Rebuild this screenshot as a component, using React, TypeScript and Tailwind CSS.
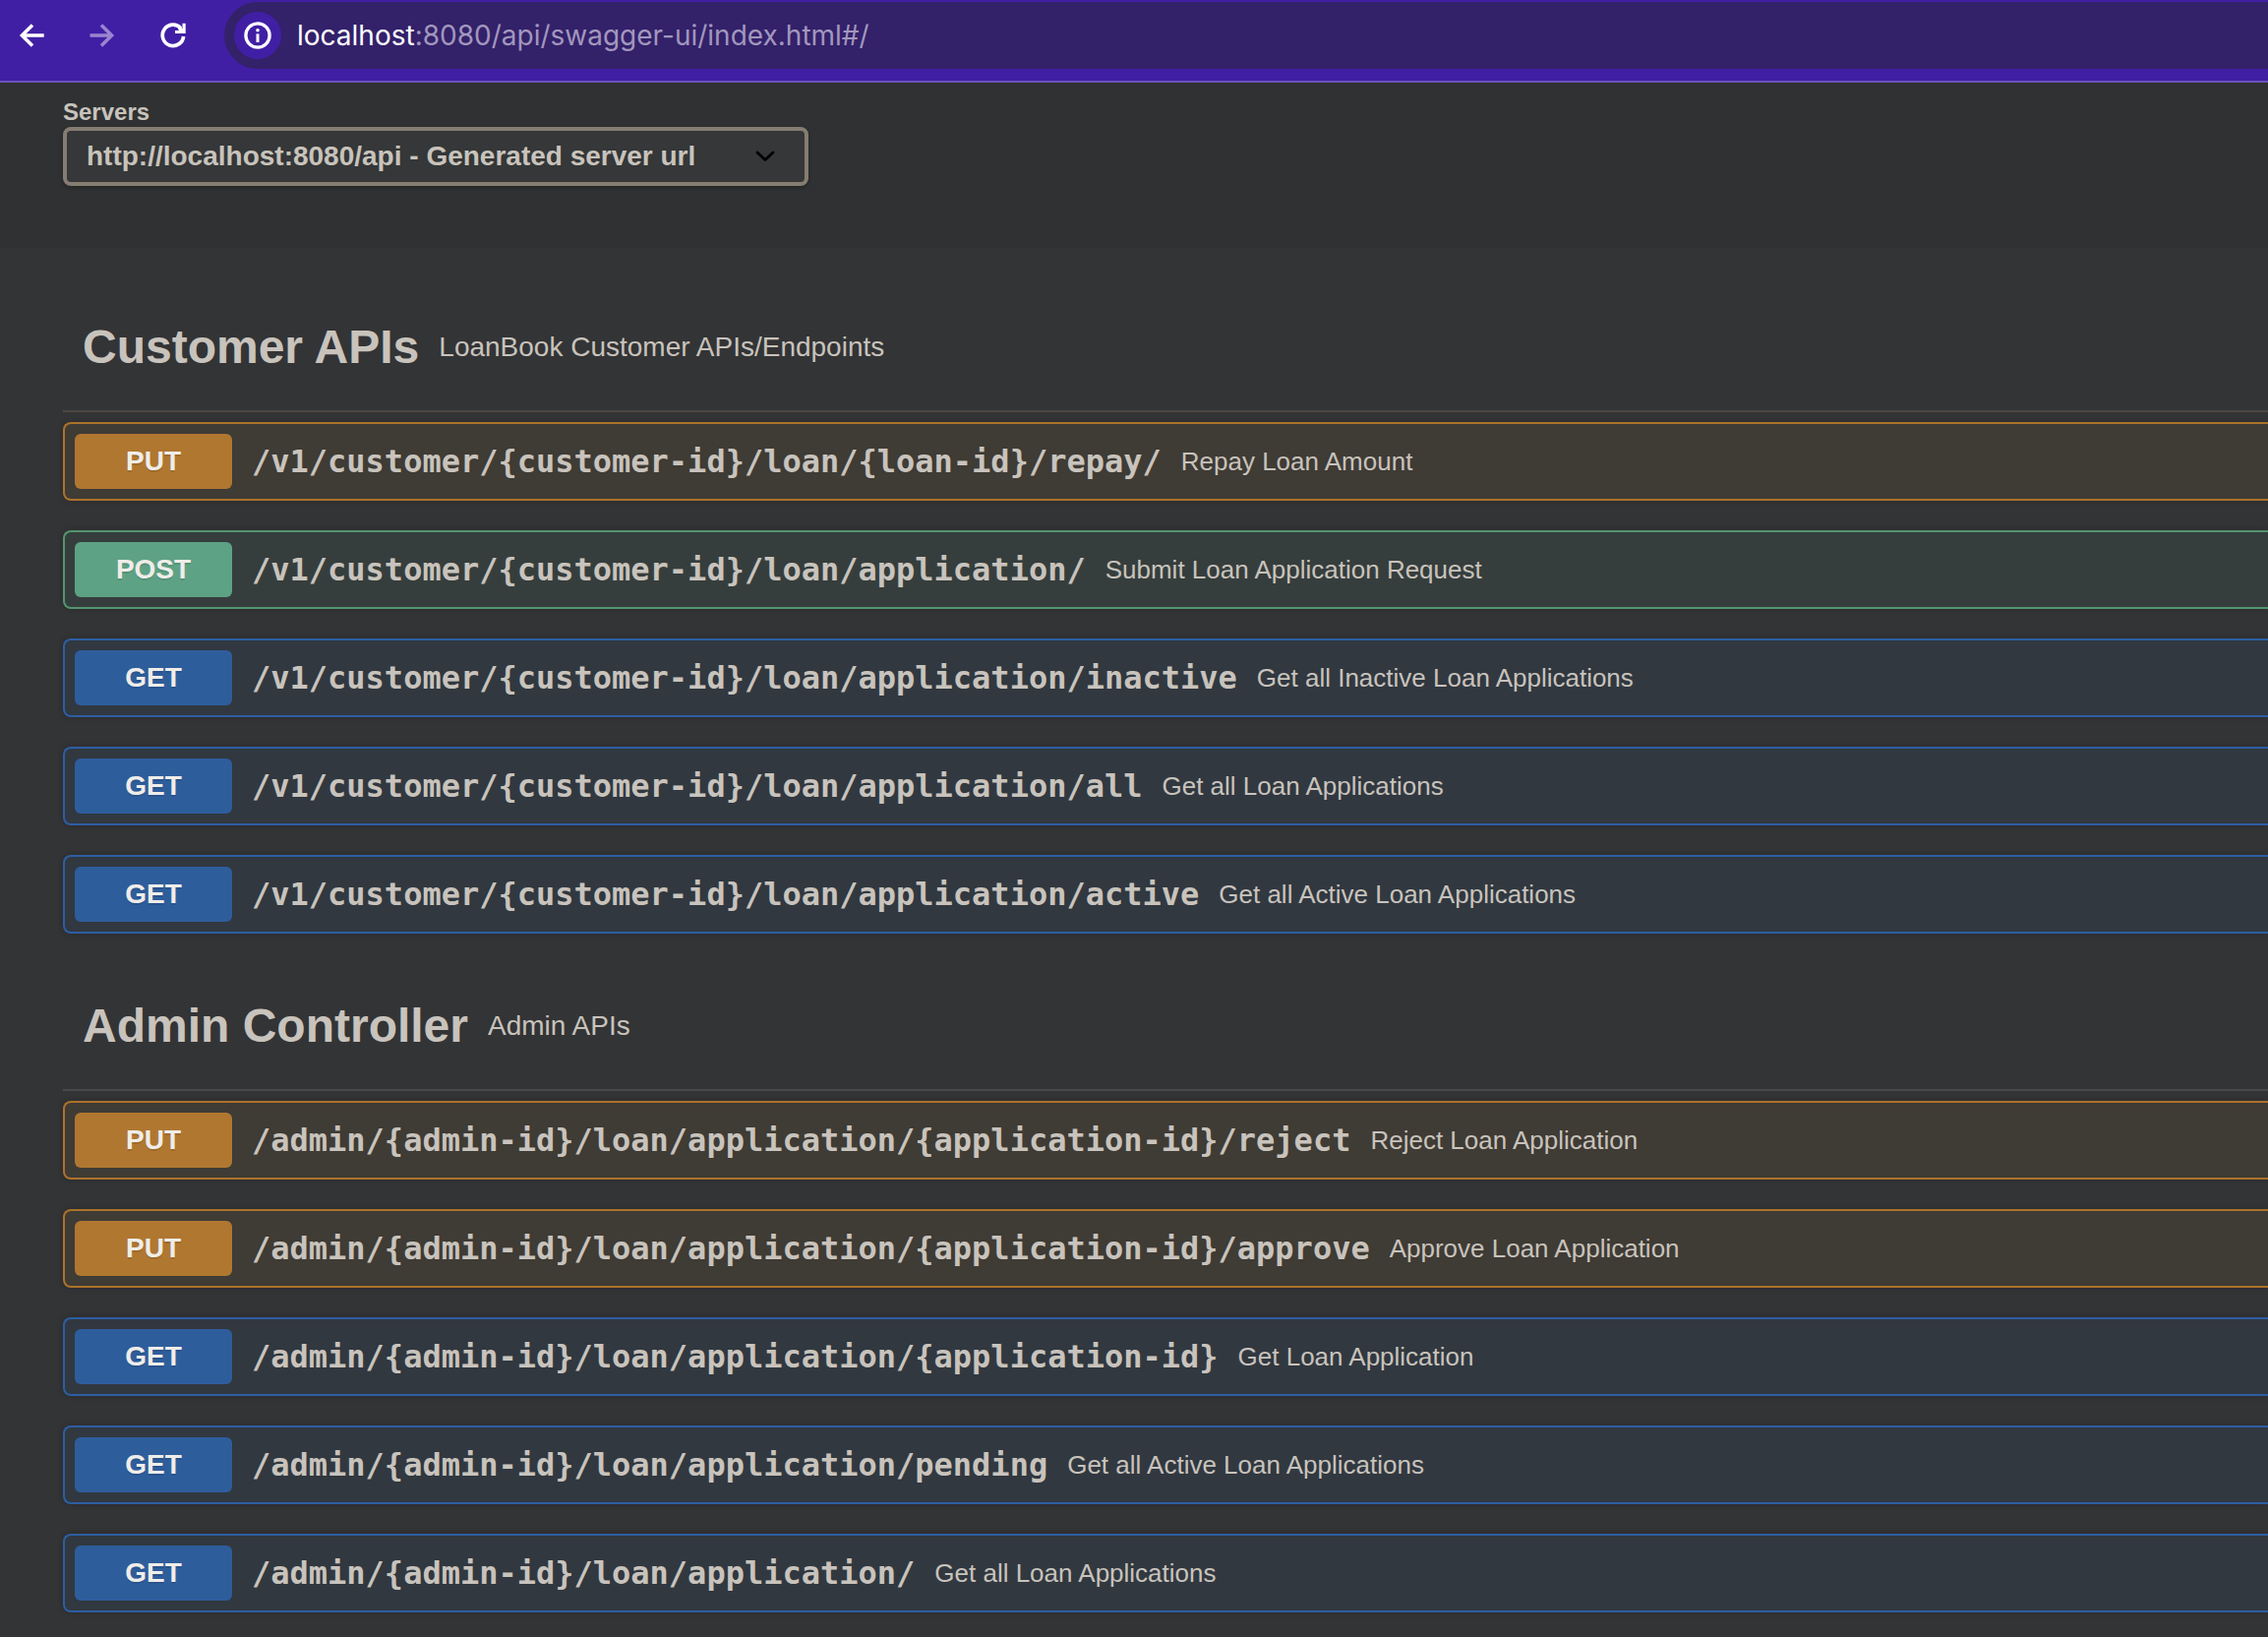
import React from "react";

type Method = "PUT" | "POST" | "GET";

interface Operation {
  method: Method;
  path: string;
  summary: string;
}

interface Tag {
  name: string;
  description: string;
  operations: Operation[];
}

const tags: Tag[] = [
  {
    name: "Customer APIs",
    description: "LoanBook Customer APIs/Endpoints",
    operations: [
      { method: "PUT", path: "/v1/customer/{customer-id}/loan/{loan-id}/repay/", summary: "Repay Loan Amount" },
      { method: "POST", path: "/v1/customer/{customer-id}/loan/application/", summary: "Submit Loan Application Request" },
      { method: "GET", path: "/v1/customer/{customer-id}/loan/application/inactive", summary: "Get all Inactive Loan Applications" },
      { method: "GET", path: "/v1/customer/{customer-id}/loan/application/all", summary: "Get all Loan Applications" },
      { method: "GET", path: "/v1/customer/{customer-id}/loan/application/active", summary: "Get all Active Loan Applications" },
    ],
  },
  {
    name: "Admin Controller",
    description: "Admin APIs",
    operations: [
      { method: "PUT", path: "/admin/{admin-id}/loan/application/{application-id}/reject", summary: "Reject Loan Application" },
      { method: "PUT", path: "/admin/{admin-id}/loan/application/{application-id}/approve", summary: "Approve Loan Application" },
      { method: "GET", path: "/admin/{admin-id}/loan/application/{application-id}", summary: "Get Loan Application" },
      { method: "GET", path: "/admin/{admin-id}/loan/application/pending", summary: "Get all Active Loan Applications" },
      { method: "GET", path: "/admin/{admin-id}/loan/application/", summary: "Get all Loan Applications" },
    ],
  },
];

const rowStyles: Record<Method, string> = {
  PUT: "border-[#ac722b] bg-[#3f3b35]",
  POST: "border-[#53946f] bg-[#363e3d]",
  GET: "border-[#2d5ea3] bg-[#313840]",
};

const badgeStyles: Record<Method, string> = {
  PUT: "bg-[#b07731]",
  POST: "bg-[#5ea285]",
  GET: "bg-[#2e5d9c]",
};

function ArrowIcon({ forward = false }: { forward?: boolean }) {
  return (
    <svg viewBox="0 0 28 28" className="size-7" fill="none" stroke="currentColor" strokeWidth="3.5" aria-hidden="true">
      {forward ? (
        <path d="M1.5 14H24M13 3.4L23.6 14L13 24.6" />
      ) : (
        <path d="M26.7 14H4.2M15 3.4L4.4 14L15 24.6" />
      )}
    </svg>
  );
}

function ReloadIcon() {
  return (
    <svg viewBox="0 0 28 28" className="size-7" fill="none" stroke="currentColor" aria-hidden="true">
      <path d="M24.6 15A10.7 10.7 0 1 1 21.8 6.6" strokeWidth="3.7" />
      <path d="M26.7 1.8V12H16V9H20.2L18.8 7.6L21.4 5L23.5 7V1.8Z" fill="currentColor" stroke="none" />
    </svg>
  );
}

function InfoIcon() {
  return (
    <svg viewBox="0 0 28 28" className="size-7" fill="none" stroke="currentColor" aria-hidden="true">
      <circle cx="14" cy="14" r="12.1" strokeWidth="3.3" />
      <path d="M14 12.4V21" strokeWidth="3" />
      <circle cx="14" cy="8.7" r="1.8" fill="currentColor" stroke="none" />
    </svg>
  );
}

function BrowserBar() {
  return (
    <header className="flex h-[84px] items-start border-b-2 border-[#6d52b9] bg-[#411fa5] pt-0.5 text-white">
      <nav aria-label="Browser" className="flex h-[68px] w-57 shrink-0 items-center gap-11 pl-[18px]">
        <button type="button" aria-label="Back"><ArrowIcon /></button>
        <button type="button" aria-label="Forward" className="text-[#9a85d0]"><ArrowIcon forward /></button>
        <button type="button" aria-label="Reload"><ReloadIcon /></button>
      </nav>
      <div className="flex h-[68px] flex-1 items-center gap-4 rounded-l-full bg-[#33216a] pl-2.5">
        <button type="button" aria-label="View site information" className="flex size-12 items-center justify-center rounded-full bg-[#411fa5]">
          <InfoIcon />
        </button>
        <a href="#/" className="font-['Inter',sans-serif] text-[28px] leading-9 text-[#a297bd]">
          <span className="text-white">localhost</span>:8080/api/swagger-ui/index.html#/
        </a>
      </div>
    </header>
  );
}

function Servers() {
  return (
    <section className="h-[168px] bg-[#2f3132] pt-3.5 pl-16">
      <label htmlFor="servers" className="block text-2xl leading-[31px] font-bold">Servers</label>
      <div className="relative w-[758px]">
        <select
          id="servers"
          className="block h-15 w-full appearance-none rounded-lg border-4 border-[#857d72] bg-[#353738] pr-20 pl-5 text-[28px] font-bold text-[#c8c3bc] shadow-[0_2px_4px_rgba(0,0,0,0.25)]"
        >
          <option>http://localhost:8080/api - Generated server url</option>
        </select>
        <svg viewBox="0 0 20 12" className="pointer-events-none absolute top-6 right-[34px] h-3 w-5" fill="none" stroke="#000" strokeWidth="2.8" strokeLinecap="round" strokeLinejoin="round" aria-hidden="true">
          <path d="M2 2L10 9.5L18 2" />
        </svg>
      </div>
    </section>
  );
}

function OperationRow({ method, path, summary }: Operation) {
  return (
    <button type="button" className={`flex h-20 w-full items-center rounded-l-lg border-2 border-r-0 pl-2.5 text-left shadow-[0_0_6px_rgba(0,0,0,0.19)] ${rowStyles[method]}`}>
      <span className={`flex h-14 w-40 shrink-0 items-center justify-center rounded-md text-[28px] font-bold text-[#efede9] [text-shadow:0_2px_0_rgba(0,0,0,0.1)] ${badgeStyles[method]}`}>
        {method}
      </span>
      <span className="px-5 font-['DejaVu_Sans_Mono',monospace] text-[32px] font-bold whitespace-nowrap">{path}</span>
      <span className="text-[26px] whitespace-nowrap">{summary}</span>
    </button>
  );
}

export default function App() {
  return (
    <div className="min-h-screen overflow-hidden bg-[#333436] font-['Liberation_Sans',Arial,sans-serif] text-[#c8c3bc]">
      <BrowserBar />
      <Servers />
      <main className="flex flex-col gap-[30px] pt-[37px] pb-6 pl-16">
        {tags.map((tag) => (
          <section key={tag.name}>
            <div className="mb-2.5 flex h-[130px] items-center gap-5 border-b-2 border-[#4b4947] pl-5">
              <h2 className="text-5xl font-bold">{tag.name}</h2>
              <p className="text-[28px]">{tag.description}</p>
            </div>
            <div className="flex flex-col gap-[30px]">
              {tag.operations.map((operation) => (
                <OperationRow key={operation.method + operation.path} {...operation} />
              ))}
            </div>
          </section>
        ))}
      </main>
    </div>
  );
}
